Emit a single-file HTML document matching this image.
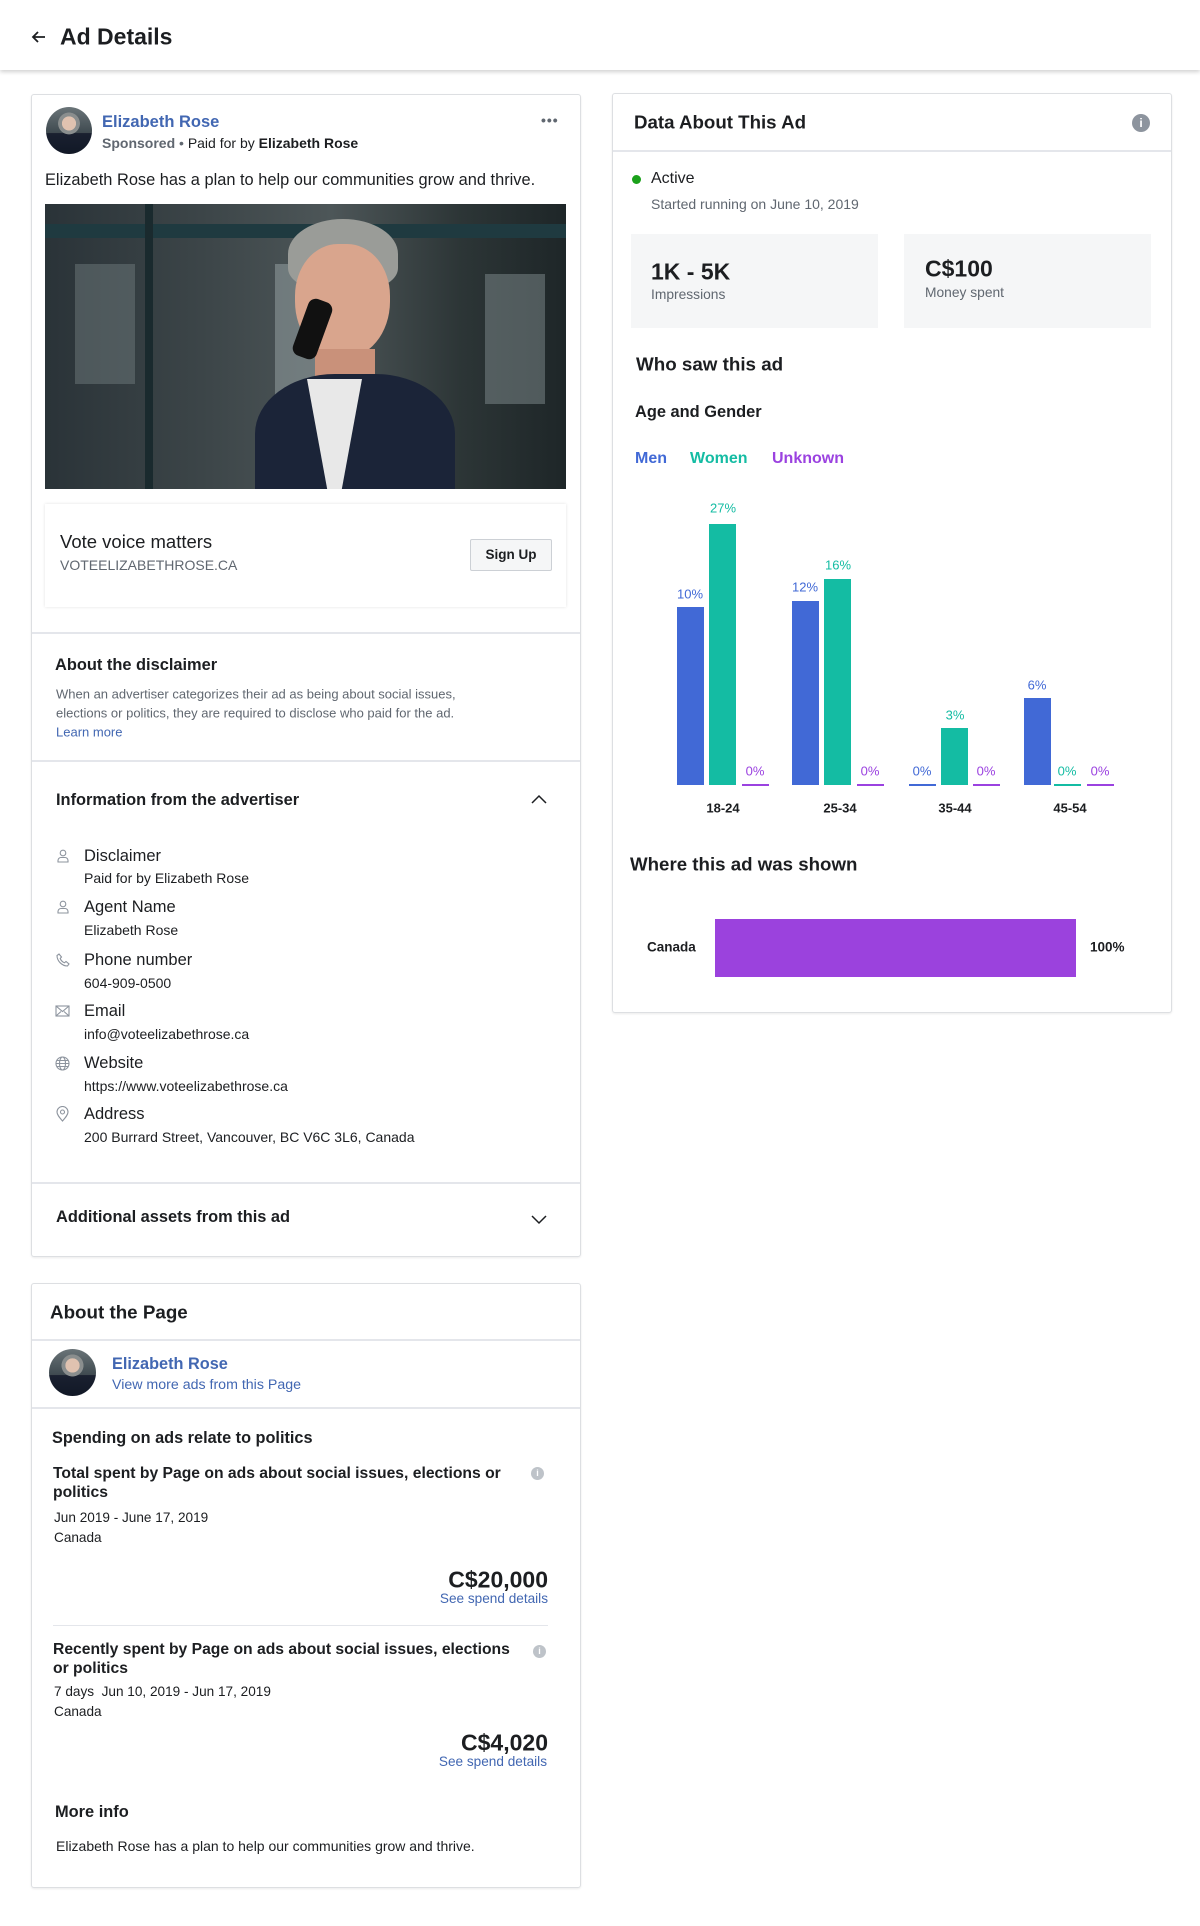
<!DOCTYPE html>
<html><head><meta charset="utf-8"><style>
*{margin:0;padding:0;box-sizing:border-box}
body{width:1200px;height:1926px;background:#fff;font-family:"Liberation Sans",Arial,sans-serif;color:#1c1e21;position:relative;overflow:hidden}
.a{position:absolute;white-space:nowrap;line-height:1}
.card{position:absolute;border:1px solid #dddfe2;border-radius:3px;background:#fff;box-shadow:0 1px 2px rgba(0,0,0,.08)}
.hr{position:absolute;height:1px;background:#e4e6eb}
.b{font-weight:bold}
.g{color:#606770}
.blue{color:#4267b2}
.c{transform:translateY(-50%)}
.bar{position:absolute}
.pl{position:absolute;font-size:13px;transform:translate(-50%,-50%);white-space:nowrap}
</style></head><body>
<!-- header -->
<div style="position:absolute;left:0;top:0;width:1200px;height:70px;background:#fff;box-shadow:0 2px 4px rgba(0,0,0,.18)"></div>
<svg class="a" style="left:31px;top:29px" width="16" height="16" viewBox="0 0 16 16"><path d="M14 8H2M7 3L2 8l5 5" stroke="#1c1e21" stroke-width="1.8" fill="none"/></svg>
<div class="a b c" style="left:60px;top:37px;font-size:23px">Ad Details</div>

<!-- left card 1 -->
<div class="card" style="left:31px;top:94px;width:550px;height:1163px"></div>
<div class="a" style="left:46px;top:107px;width:46px;height:47px;border-radius:50%;background:radial-gradient(circle at 50% 35%,#e0c2b0 0 18%,#8a8e8e 19% 28%,transparent 29%),linear-gradient(180deg,#6a7478 0%,#3f4a50 55%,#1a2030 56%,#111826 100%)"></div>
<div class="a b blue c" style="left:102px;top:122px;font-size:16.5px">Elizabeth Rose</div>
<div class="a c" style="left:102px;top:143px;font-size:14px;color:#606770"><b>Sponsored</b> • <span style="color:#1c1e21">Paid for by</span> <b style="color:#1c1e21">Elizabeth Rose</b></div>
<div class="a b c" style="left:541px;top:120px;font-size:14px;color:#606770;letter-spacing:1px">•••</div>
<div class="a c" style="left:45px;top:180px;font-size:16.4px">Elizabeth Rose has a plan to help our communities grow and thrive.</div>
<div class="a" style="left:45px;top:204px;width:521px;height:285px;overflow:hidden;background:linear-gradient(90deg,#2a3338 0%,#3c4548 30%,#4d5658 55%,#2c3536 80%,#1e2628 100%)">
 <div style="position:absolute;left:0;top:20px;width:521px;height:14px;background:#1f3a40"></div>
 <div style="position:absolute;left:100px;top:0;width:8px;height:285px;background:#1a2a2e"></div>
 <div style="position:absolute;left:30px;top:60px;width:60px;height:120px;background:#6d7a7c;opacity:.5"></div>
 <div style="position:absolute;left:230px;top:60px;width:40px;height:140px;background:#9aa6a8;opacity:.5"></div>
 <div style="position:absolute;left:440px;top:70px;width:60px;height:130px;background:#7f8c8e;opacity:.5"></div>
 <div style="position:absolute;left:243px;top:15px;width:110px;height:70px;border-radius:50% 50% 30% 30%;background:#9a9c98"></div>
 <div style="position:absolute;left:250px;top:40px;width:95px;height:115px;border-radius:45% 45% 50% 50%;background:#d9a58d"></div>
 <div style="position:absolute;left:270px;top:145px;width:60px;height:40px;background:#c9917a"></div>
 <div style="position:absolute;left:210px;top:170px;width:200px;height:150px;border-radius:40% 40% 0 0;background:#1b2438"></div>
 <div style="position:absolute;left:262px;top:175px;width:55px;height:120px;background:#e8e8e8;clip-path:polygon(0 0,100% 0,60% 100%,40% 100%)"></div>
 <div style="position:absolute;left:255px;top:95px;width:25px;height:60px;border-radius:8px;background:#111;transform:rotate(20deg)"></div>
</div>
<div class="a" style="left:45px;top:504px;width:521px;height:103px;background:#fff;box-shadow:0 0 3px rgba(0,0,0,.12)"></div>
<div class="a c" style="left:60px;top:542px;font-size:18.5px">Vote voice matters</div>
<div class="a c g" style="left:60px;top:565px;font-size:14px">VOTEELIZABETHROSE.CA</div>
<div class="a" style="left:470px;top:539px;width:82px;height:32px;background:#f5f6f7;border:1px solid #ccd0d5;border-radius:2px;font-size:13.5px;font-weight:bold;text-align:center;line-height:30px">Sign Up</div>
<div class="hr" style="left:32px;top:632px;width:548px;height:2px"></div>
<div class="a b c" style="left:55px;top:665px;font-size:16.4px">About the disclaimer</div>
<div class="a c g" style="left:56px;top:694px;font-size:13px">When an advertiser categorizes their ad as being about social issues,</div>
<div class="a c g" style="left:56px;top:713px;font-size:13px">elections or politics, they are required to disclose who paid for the ad.</div>
<div class="a c blue" style="left:56px;top:732px;font-size:13px">Learn more</div>
<div class="hr" style="left:32px;top:760px;width:548px;height:2px"></div>
<div class="a b c" style="left:56px;top:800px;font-size:16.4px">Information from the advertiser</div>
<svg class="a" style="left:531px;top:794px" width="16" height="10" viewBox="0 0 16 10"><path d="M1 9L8 2l7 7" stroke="#1c1e21" stroke-width="1.5" fill="none"/></svg>

<svg class="a" style="left:56px;top:849px" width="14" height="14" viewBox="0 0 14 14" fill="none" stroke="#8d949e" stroke-width="1.1"><circle cx="7" cy="4" r="2.8"/><path d="M2 13v-1.5a3 3 0 0 1 3-3h4a3 3 0 0 1 3 3V13z"/></svg>
<div class="a c" style="left:84px;top:856px;font-size:16.5px">Disclaimer</div>
<div class="a c" style="left:84px;top:878px;font-size:14px">Paid for by Elizabeth Rose</div>
<svg class="a" style="left:56px;top:900px" width="14" height="14" viewBox="0 0 14 14" fill="none" stroke="#8d949e" stroke-width="1.1"><circle cx="7" cy="4" r="2.8"/><path d="M2 13v-1.5a3 3 0 0 1 3-3h4a3 3 0 0 1 3 3V13z"/></svg>
<div class="a c" style="left:84px;top:907px;font-size:16.5px">Agent Name</div>
<div class="a c" style="left:84px;top:930px;font-size:14px">Elizabeth Rose</div>
<svg class="a" style="left:56px;top:953px" width="14" height="14" viewBox="0 0 14 14" fill="none" stroke="#8d949e" stroke-width="1.1"><path d="M3 1l2.5 3-1.3 1.5c.8 2 2.3 3.5 4.3 4.3L10 8.5l3 2.5-1.5 2C6 13 1 8 1 2.5z"/></svg>
<div class="a c" style="left:84px;top:960px;font-size:16.5px">Phone number</div>
<div class="a c" style="left:84px;top:983px;font-size:14px">604-909-0500</div>
<svg class="a" style="left:55px;top:1005px" width="15" height="12" viewBox="0 0 15 12" fill="none" stroke="#8d949e" stroke-width="1.1"><rect x="1" y="1" width="13" height="10"/><path d="M1 1l6.5 5.5L14 1M1 11l5-4.5M14 11l-5-4.5"/></svg>
<div class="a c" style="left:84px;top:1011px;font-size:16.5px">Email</div>
<div class="a c" style="left:84px;top:1034px;font-size:14px">info@voteelizabethrose.ca</div>
<svg class="a" style="left:55px;top:1056px" width="15" height="15" viewBox="0 0 15 15" fill="none" stroke="#8d949e" stroke-width="1.1"><circle cx="7.5" cy="7.5" r="6.5"/><ellipse cx="7.5" cy="7.5" rx="3" ry="6.5"/><path d="M1 7.5h13M2 4.5h11M2 10.5h11"/></svg>
<div class="a c" style="left:84px;top:1063px;font-size:16.5px">Website</div>
<div class="a c" style="left:84px;top:1086px;font-size:14px">https://www.voteelizabethrose.ca</div>
<svg class="a" style="left:56px;top:1106px" width="13" height="16" viewBox="0 0 13 16" fill="none" stroke="#8d949e" stroke-width="1.1"><path d="M6.5 15C3 11 1 8.5 1 6a5.5 5.5 0 0 1 11 0c0 2.5-2 5-5.5 9z"/><circle cx="6.5" cy="6" r="2"/></svg>
<div class="a c" style="left:84px;top:1114px;font-size:16.5px">Address</div>
<div class="a c" style="left:84px;top:1137px;font-size:14px">200 Burrard Street, Vancouver, BC V6C 3L6, Canada</div>
<div class="hr" style="left:32px;top:1182px;width:548px;height:2px"></div>
<div class="a b c" style="left:56px;top:1217px;font-size:16.4px">Additional assets from this ad</div>
<svg class="a" style="left:531px;top:1215px" width="16" height="10" viewBox="0 0 16 10"><path d="M1 1l7 7 7-7" stroke="#1c1e21" stroke-width="1.5" fill="none"/></svg>

<!-- left card 2 -->
<div class="card" style="left:31px;top:1283px;width:550px;height:605px"></div>
<div class="a b c" style="left:50px;top:1313px;font-size:18.8px">About the Page</div>
<div class="hr" style="left:32px;top:1339px;width:548px;height:2px"></div>
<div class="a" style="left:49px;top:1349px;width:47px;height:47px;border-radius:50%;background:radial-gradient(circle at 50% 35%,#e0c2b0 0 18%,#8a8e8e 19% 28%,transparent 29%),linear-gradient(180deg,#6a7478 0%,#3f4a50 55%,#1a2030 56%,#111826 100%)"></div>
<div class="a b blue c" style="left:112px;top:1364px;font-size:16.3px">Elizabeth Rose</div>
<div class="a blue c" style="left:112px;top:1385px;font-size:14.2px">View more ads from this Page</div>
<div class="hr" style="left:32px;top:1407px;width:548px;height:2px"></div>
<div class="a b c" style="left:52px;top:1438px;font-size:16.3px">Spending on ads relate to politics</div>
<div class="a b c" style="left:53px;top:1474px;font-size:15.7px">Total spent by Page on ads about social issues, elections or</div>
<div class="a b c" style="left:53px;top:1493px;font-size:15.7px">politics</div>
<div class="a" style="left:531px;top:1467px;width:13px;height:13px;border-radius:50%;background:#bec3c9;color:#fff;font-size:9px;font-weight:bold;text-align:center;line-height:13px">i</div>
<div class="a c" style="left:54px;top:1518px;font-size:13.6px">Jun 2019 - June 17, 2019</div>
<div class="a c" style="left:54px;top:1538px;font-size:13.6px">Canada</div>
<div class="a b c" style="right:652px;top:1580px;font-size:23px">C$20,000</div>
<div class="a blue c" style="right:652px;top:1599px;font-size:13.6px">See spend details</div>
<div class="hr" style="left:53px;top:1625px;width:495px"></div>
<div class="a b c" style="left:53px;top:1650px;font-size:15.7px">Recently spent by Page on ads about social issues, elections</div>
<div class="a b c" style="left:53px;top:1669px;font-size:15.7px">or politics</div>
<div class="a" style="left:533px;top:1645px;width:13px;height:13px;border-radius:50%;background:#bec3c9;color:#fff;font-size:9px;font-weight:bold;text-align:center;line-height:13px">i</div>
<div class="a c" style="left:54px;top:1692px;font-size:13.6px">7 days&nbsp; Jun 10, 2019 - Jun 17, 2019</div>
<div class="a c" style="left:54px;top:1712px;font-size:13.6px">Canada</div>
<div class="a b c" style="right:652px;top:1743px;font-size:23px">C$4,020</div>
<div class="a blue c" style="right:653px;top:1762px;font-size:13.6px">See spend details</div>
<div class="a b c" style="left:55px;top:1812px;font-size:16.4px">More info</div>
<div class="a c" style="left:56px;top:1846px;font-size:14px">Elizabeth Rose has a plan to help our communities grow and thrive.</div>

<!-- right card -->
<div class="card" style="left:612px;top:93px;width:560px;height:920px"></div>
<div class="a b c" style="left:634px;top:123px;font-size:18.7px">Data About This Ad</div>
<div class="a" style="left:1132px;top:114px;width:18px;height:18px;border-radius:50%;background:#8d949e;color:#fff;font-size:12px;font-weight:bold;text-align:center;line-height:18px">i</div>
<div class="hr" style="left:613px;top:150px;width:558px;height:2px"></div>
<div class="a" style="left:632px;top:175px;width:9px;height:9px;border-radius:50%;background:#1ba11b"></div>
<div class="a c" style="left:651px;top:179px;font-size:16px">Active</div>
<div class="a c g" style="left:651px;top:204px;font-size:14px">Started running on June 10, 2019</div>
<div class="a" style="left:631px;top:234px;width:247px;height:94px;background:#f5f6f7"></div>
<div class="a" style="left:904px;top:234px;width:247px;height:94px;background:#f5f6f7"></div>
<div class="a b c" style="left:651px;top:272px;font-size:23px">1K - 5K</div>
<div class="a c g" style="left:651px;top:295px;font-size:13.8px">Impressions</div>
<div class="a b c" style="left:925px;top:269px;font-size:23px">C$100</div>
<div class="a c g" style="left:925px;top:293px;font-size:13.8px">Money spent</div>
<div class="a b c" style="left:636px;top:365px;font-size:18.8px">Who saw this ad</div>
<div class="a b c" style="left:635px;top:412px;font-size:16.4px">Age and Gender</div>
<div class="a b c" style="left:635px;top:459px;font-size:16px;color:#4169d6">Men</div>
<div class="a b c" style="left:690px;top:459px;font-size:16px;color:#14bca3">Women</div>
<div class="a b c" style="left:772px;top:459px;font-size:16px;color:#9b42e0">Unknown</div>

<!-- chart (baseline 785) -->
<div class="bar" style="left:677px;top:607px;width:27px;height:178px;background:#4169d6"></div>
<div class="bar" style="left:709px;top:524px;width:27px;height:261px;background:#14bca3"></div>
<div class="bar" style="left:742px;top:784px;width:27px;height:2px;background:#9b42e0"></div>
<div class="bar" style="left:792px;top:601px;width:27px;height:184px;background:#4169d6"></div>
<div class="bar" style="left:824px;top:579px;width:27px;height:206px;background:#14bca3"></div>
<div class="bar" style="left:857px;top:784px;width:27px;height:2px;background:#9b42e0"></div>
<div class="bar" style="left:909px;top:784px;width:27px;height:2px;background:#4169d6"></div>
<div class="bar" style="left:941px;top:728px;width:27px;height:57px;background:#14bca3"></div>
<div class="bar" style="left:973px;top:784px;width:27px;height:2px;background:#9b42e0"></div>
<div class="bar" style="left:1024px;top:698px;width:27px;height:87px;background:#4169d6"></div>
<div class="bar" style="left:1054px;top:784px;width:27px;height:2px;background:#14bca3"></div>
<div class="bar" style="left:1087px;top:784px;width:27px;height:2px;background:#9b42e0"></div>
<div class="pl" style="left:690px;top:594px;color:#4169d6">10%</div>
<div class="pl" style="left:723px;top:508px;color:#14bca3">27%</div>
<div class="pl" style="left:755px;top:771px;color:#9b42e0">0%</div>
<div class="pl" style="left:805px;top:587px;color:#4169d6">12%</div>
<div class="pl" style="left:838px;top:565px;color:#14bca3">16%</div>
<div class="pl" style="left:870px;top:771px;color:#9b42e0">0%</div>
<div class="pl" style="left:922px;top:771px;color:#4169d6">0%</div>
<div class="pl" style="left:955px;top:715px;color:#14bca3">3%</div>
<div class="pl" style="left:986px;top:771px;color:#9b42e0">0%</div>
<div class="pl" style="left:1037px;top:685px;color:#4169d6">6%</div>
<div class="pl" style="left:1067px;top:771px;color:#14bca3">0%</div>
<div class="pl" style="left:1100px;top:771px;color:#9b42e0">0%</div>
<div class="pl b" style="left:723px;top:808px">18-24</div>
<div class="pl b" style="left:840px;top:808px">25-34</div>
<div class="pl b" style="left:955px;top:808px">35-44</div>
<div class="pl b" style="left:1070px;top:808px">45-54</div>

<div class="a b c" style="left:630px;top:865px;font-size:18.7px">Where this ad was shown</div>
<div class="a b c" style="left:647px;top:947px;font-size:13.5px">Canada</div>
<div class="bar" style="left:715px;top:919px;width:361px;height:58px;background:#9b42dd"></div>
<div class="a b c" style="left:1090px;top:947px;font-size:13.5px">100%</div>
</body></html>
